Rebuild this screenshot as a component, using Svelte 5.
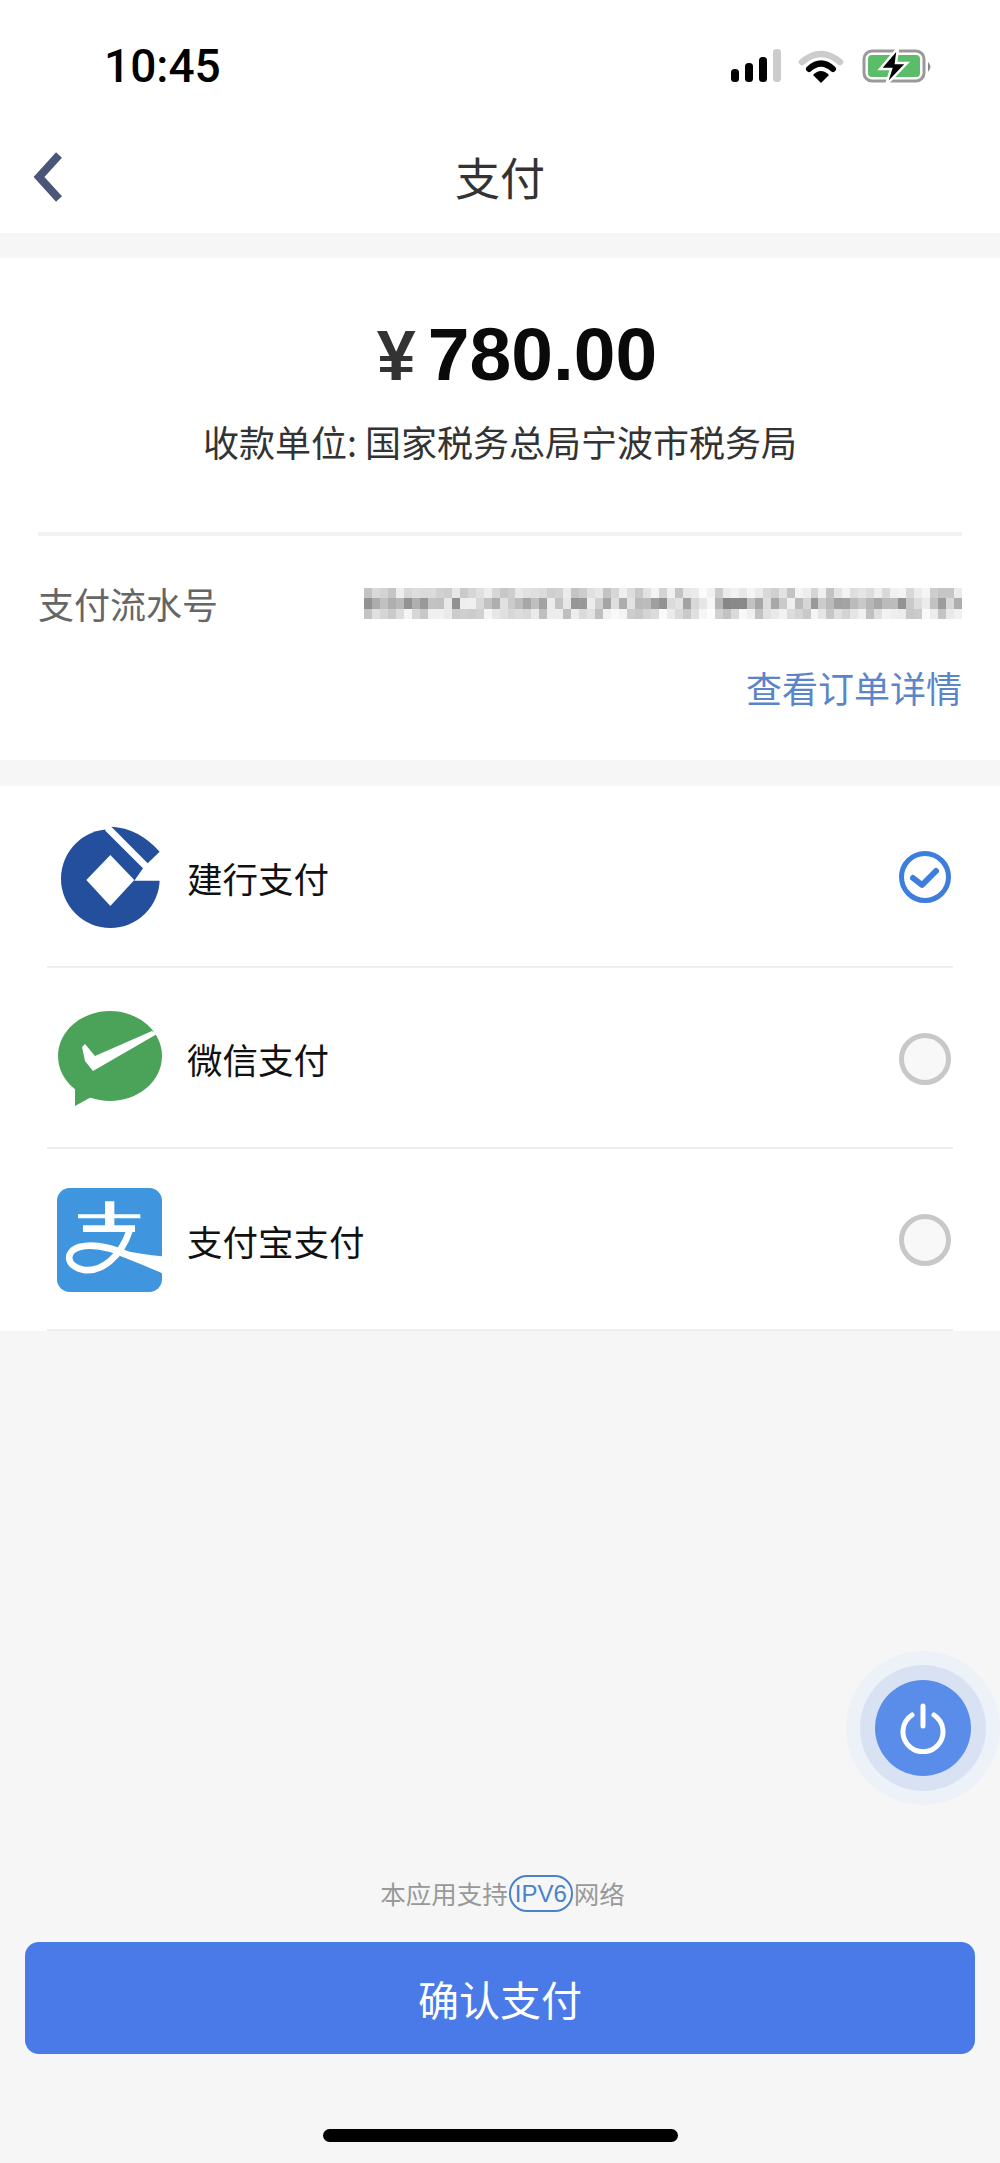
<script lang="ts">
  // pixelated transaction number: deterministic noise so the mosaic is stable
  let seed = 11;
  function rnd() {
    seed = (seed * 16807) % 2147483647;
    return seed / 2147483647;
  }
  const cols = 75;
  const rowShade = [
    [195, 245],
    [135, 240],
    [190, 250],
  ];
  const mosaic: { x: number; y: number; c: string }[] = [];
  for (let r = 0; r < 3; r++) {
    for (let i = 0; i < cols; i++) {
      const [lo, hi] = rowShade[r];
      const gap = i === 42 || i === 43 || i === 70 ? 0.3 : 1;
      const g = Math.round(255 - (255 - (lo + rnd() * (hi - lo))) * gap);
      mosaic.push({ x: i * 8, y: r * 10.4, c: `rgb(${g},${g},${g})` });
    }
  }

  const methods = [
    { id: "ccb", name: "建行支付", checked: true },
    { id: "wx", name: "微信支付", checked: false },
    { id: "ali", name: "支付宝支付", checked: false },
  ];
</script>

<div class="page">
  <div class="top">
    <div class="status">
      <span class="time">10:45</span>
      <svg class="sys" width="204" height="36" viewBox="0 0 204 36">
        <rect x="3" y="20" width="8" height="13" rx="3.5" fill="#000" />
        <rect x="17" y="14" width="8" height="19" rx="3.5" fill="#000" />
        <rect x="31" y="8" width="8" height="25" rx="3.5" fill="#000" />
        <rect x="45" y="0" width="8" height="33" rx="3.5" fill="#ccc" />
        <path d="M74 13 Q93 -3 112 13" fill="none" stroke="#ccc" stroke-width="6.5" stroke-linecap="round" />
        <path d="M81 20 Q93 9 105 20" fill="none" stroke="#000" stroke-width="6" stroke-linecap="round" />
        <path d="M85 26 Q93 18 101 26 L93 34 Z" fill="#000" />
        <rect x="136" y="2" width="60" height="30" rx="8" fill="none" stroke="#999" stroke-width="3" />
        <rect x="140" y="6" width="52" height="22" rx="4" fill="#5cbd68" />
        <path d="M200 13 Q205 17.5 200 23 Z" fill="#888" />
        <path d="M170 -1 L152 20 H163 L158 36 L179 14 H168 Z" fill="#000" stroke="#fff" stroke-width="2.5" />
      </svg>
    </div>
    <div class="nav">
      <svg class="back" width="34" height="52" viewBox="0 0 34 52">
        <path d="M28 4 L8 26 L28 48" fill="none" stroke="#4a5578" stroke-width="8" />
      </svg>
      <span class="title">支付</span>
    </div>
  </div>

  <section class="order">
    <div class="amount"><span class="yen">¥</span>780.00</div>
    <div class="payee">收款单位: 国家税务总局宁波市税务局</div>
    <div class="rule"></div>
    <div class="serial">
      <span class="serial-label">支付流水号</span>
      <svg width="598" height="31" viewBox="0 0 600 31" shape-rendering="crispEdges">
        {#each mosaic as m}
          <rect x={m.x} y={m.y} width="8" height="10.4" fill={m.c} />
        {/each}
      </svg>
    </div>
    <div class="details">查看订单详情</div>
  </section>

  <section class="methods">
    {#each methods as m (m.id)}
      <div class="method">
        <div class="logo">
          {#if m.id === "ccb"}
            <svg class="ccb" width="100" height="105" viewBox="92 75 300 315">
              <circle cx="240" cy="236" r="148" fill="#234f9c" />
              <path d="M225 92 V70 H400 V242 H312 L338 205 Z" fill="#fff" />
              <path d="M243 80 Q325 84 388 155 L352 190 Z" fill="#234f9c" />
              <path d="M240 165 L312 240 L240 318 L168 240 Z" fill="#fff" />
            </svg>
          {:else if m.id === "wx"}
            <svg width="105" height="95" viewBox="0 0 105 95">
              <ellipse cx="53" cy="45" rx="52" ry="45" fill="#4ba35a" />
              <path d="M18 78 V95 L38 84 Z" fill="#4ba35a" />
              <path d="M25 36 L28 33 L38 45 L95 20 L100 23 L36 60 L28 50 Z" fill="#fff" />
            </svg>
          {:else}
            <svg width="105" height="104" viewBox="82 1165 315 312">
              <defs>
                <clipPath id="ali-clip">
                  <rect x="82" y="1165" width="315" height="312" rx="38" />
                </clipPath>
              </defs>
              <g clip-path="url(#ali-clip)">
                <rect x="82" y="1165" width="315" height="312" fill="#3f96de" />
                <g fill="none" stroke="#fff">
                  <path d="M145 1250 H332" stroke-width="12" />
                  <path d="M240 1205 V1292" stroke-width="28" />
                  <path d="M160 1287 H316" stroke-width="20" />
                  <path
                    d="M300 1292 C275 1370 215 1420 160 1410 C108 1400 105 1355 150 1342 C200 1328 260 1350 310 1372"
                    stroke-width="20"
                  />
                </g>
                <path d="M270 1350 Q340 1365 400 1370 V1422 Q340 1395 270 1368 Z" fill="#fff" />
              </g>
            </svg>
          {/if}
        </div>
        <span class="method-name">{m.name}</span>
        <svg class="radio" width="54" height="54" viewBox="0 0 54 54">
          {#if m.checked}
            <circle cx="27" cy="27" r="23.5" fill="#fff" stroke="#3d7ddc" stroke-width="5" />
            <path d="M15 28 L24 35 L38 21" fill="none" stroke="#3d7ddc" stroke-width="6" stroke-linecap="round" stroke-linejoin="round" />
          {:else}
            <circle cx="27" cy="27" r="23.5" fill="#f8f8f8" stroke="#c8c8c8" stroke-width="5" />
          {/if}
        </svg>
      </div>
    {/each}
  </section>

  <div class="bottom">
    <div class="ipv6">本应用支持<span class="pill">IPV6</span>网络</div>
    <button class="pay">确认支付</button>
    <div class="home"></div>
  </div>

  <button class="float" aria-label="退出">
    <svg width="52" height="52" viewBox="0 0 52 52">
      <path d="M15 13 A20 20 0 1 0 37 13" fill="none" stroke="#fff" stroke-width="5" stroke-linecap="round" />
      <path d="M26 4 V24" fill="none" stroke="#fff" stroke-width="5" stroke-linecap="round" />
    </svg>
  </button>
</div>

<style>
  :global(body) {
    margin: 0;
    background: #f6f6f6;
  }
  .page {
    position: relative;
    width: 1000px;
    height: 2163px;
    display: flex;
    flex-direction: column;
    background: #f6f6f6;
    font-family: "Noto Sans CJK SC", "Liberation Sans", sans-serif;
    overflow: hidden;
  }
  .top {
    background: #fff;
    height: 233px;
  }
  .status {
    height: 132px;
    box-sizing: border-box;
    padding: 46px 68px 0 104px;
    display: flex;
    justify-content: space-between;
    align-items: flex-start;
  }
  .time {
    font-family: Roboto, "Liberation Sans", sans-serif;
    font-weight: 500;
    font-size: 46px;
    line-height: 40px;
    color: #000;
  }
  .sys {
    margin-top: 3px;
  }
  .nav {
    position: relative;
    display: flex;
    justify-content: center;
    align-items: center;
    height: 90px;
  }
  .back {
    position: absolute;
    left: 31px;
    top: 19px;
  }
  .title {
    font-size: 45px;
    line-height: 90px;
    color: #333;
  }
  .order {
    margin-top: 25px;
    height: 502px;
    box-sizing: border-box;
    background: #fff;
    padding: 52px 38px 0;
    display: flex;
    flex-direction: column;
  }
  .amount {
    padding-left: 34px;
    text-align: center;
    font-family: "Liberation Sans", sans-serif;
    font-weight: 700;
    font-size: 75px;
    line-height: 88px;
    color: #0a0a0a;
  }
  .yen {
    color: #333;
    margin-right: 12px;
    font-size: 70px;
  }
  .payee {
    margin-top: 16px;
    text-align: center;
    font-size: 36px;
    line-height: 50px;
    color: #333;
  }
  .rule {
    margin-top: 66px;
    height: 4px;
    background: #f2f2f2;
  }
  .serial {
    margin-top: 50px;
    height: 35px;
    display: flex;
    justify-content: space-between;
    align-items: center;
  }
  .serial-label {
    font-size: 36px;
    line-height: 35px;
    color: #666;
  }
  .details {
    margin-top: 41px;
    text-align: right;
    font-size: 36px;
    line-height: 50px;
    color: #5b85c9;
  }
  .methods {
    margin-top: 26px;
    background: #fff;
    padding: 0 47px;
  }
  .method {
    height: 176.5px;
    padding-top: 3px;
    display: flex;
    align-items: center;
    border-bottom: 2px solid #efefef;
  }
  .logo {
    width: 105px;
    margin: 0 25px 0 10px;
    display: flex;
    justify-content: center;
  }
  .ccb {
    margin-left: 3px;
  }
  .method-name {
    flex: 1;
    font-size: 35.5px;
    color: #111;
  }
  .radio {
    margin-right: 1px;
  }
  .bottom {
    margin-top: auto;
    display: flex;
    flex-direction: column;
    align-items: center;
    padding-bottom: 21px;
  }
  .ipv6 {
    display: flex;
    align-items: center;
    padding-left: 5px;
    font-size: 25.5px;
    line-height: 38px;
    color: #999;
  }
  .pill {
    box-sizing: border-box;
    height: 37px;
    width: 64px;
    margin: 0 1px;
    border: 2px solid #4a82c8;
    border-radius: 18px;
    text-align: center;
    font-family: "Liberation Sans", sans-serif;
    font-size: 24px;
    line-height: 33px;
    color: #4a82c8;
  }
  .pay {
    margin-top: 30px;
    width: 950px;
    height: 112px;
    border: 0;
    border-radius: 14px;
    background: #4a7ae8;
    color: #fff;
    font-family: inherit;
    font-size: 41px;
  }
  .home {
    margin-top: 75px;
    width: 355px;
    height: 13px;
    border-radius: 7px;
    background: #000;
  }
  .float {
    position: absolute;
    left: 875px;
    top: 1680px;
    width: 96px;
    height: 96px;
    padding: 0;
    border: 0;
    border-radius: 50%;
    background: #5a8dea;
    box-shadow:
      0 0 0 15px #d9e2f3,
      0 0 0 29px #edf1f8;
    display: flex;
    align-items: center;
    justify-content: center;
  }
</style>
